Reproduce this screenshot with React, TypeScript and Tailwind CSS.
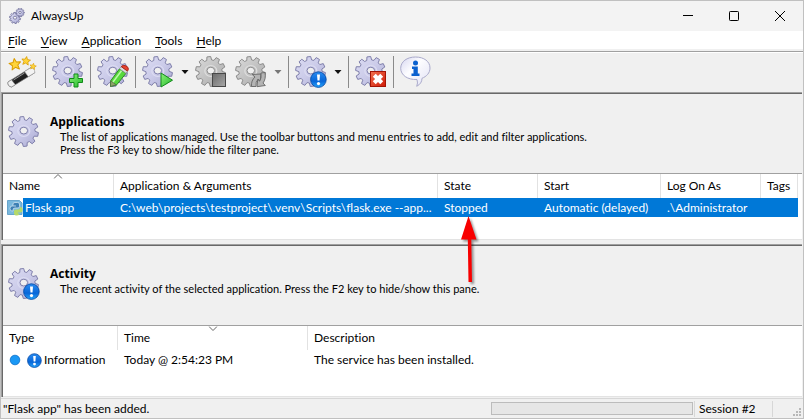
import type { ReactNode } from "react";

type Badge = "add" | "edit" | "play" | "stop" | "restart" | "info" | "close";

const TEETH = 10;

function gearPath(cx: number, cy: number, outer: number, inner: number, turn: number) {
  const step = (Math.PI * 2) / TEETH;
  const marks = [
    [-0.34, inner],
    [-0.2, outer],
    [0.2, outer],
    [0.34, inner],
  ];
  const points: string[] = [];
  for (let i = 0; i < TEETH; i++) {
    for (const [offset, radius] of marks) {
      const angle = (i + offset) * step + turn;
      points.push(`${(cx + Math.cos(angle) * radius).toFixed(2)} ${(cy + Math.sin(angle) * radius).toFixed(2)}`);
    }
  }
  return `M${points.join("L")}Z`;
}

const HOLE = "M12 14.6a3.8 3.400 0 1 0 7.600 0a3.800 3.400 0 1 0 -7.600 0Z";
const GEAR = gearPath(15.5, 15.5, 15, 11.6, 0.2) + HOLE;
const SMALL_A = gearPath(6, 10, 5.6, 4.2, 0.2) + "M4.3 9.7a1.7 1.5 0 1 0 3.4 0a1.7 1.5 0 1 0 -3.4 0Z";
const SMALL_B = gearPath(11, 4.6, 4.3, 3.2, 0) + "M9.7 4.4a1.3 1.1 0 1 0 2.6 0a1.3 1.1 0 1 0 -2.6 0Z";

function Defs() {
  return (
    <svg className="absolute size-0" aria-hidden="true">
      <defs>
        <linearGradient id="lilac" x1="0" y1="0" x2="1" y2="1">
          <stop offset="0" stopColor="#dcdcf3" />
          <stop offset=".5" stopColor="#cbcbe9" />
          <stop offset="1" stopColor="#a9a9d2" />
        </linearGradient>
        <linearGradient id="silver" x1="0" y1="0" x2="1" y2="1">
          <stop offset="0" stopColor="#dcdcdc" />
          <stop offset="1" stopColor="#a8a8a8" />
        </linearGradient>
        <linearGradient id="blue" x1="0" y1="0" x2="0" y2="1">
          <stop offset="0" stopColor="#2a8cf0" />
          <stop offset=".6" stopColor="#0866d8" />
          <stop offset="1" stopColor="#25a5fb" />
        </linearGradient>
        <linearGradient id="green" x1="0" y1="0" x2="1" y2="1">
          <stop offset="0" stopColor="#8df27a" />
          <stop offset="1" stopColor="#22b82a" />
        </linearGradient>
        <linearGradient id="red" x1="0" y1="0" x2="1" y2="1">
          <stop offset="0" stopColor="#f2714f" />
          <stop offset="1" stopColor="#cf1a08" />
        </linearGradient>
        <linearGradient id="steel" x1="0" y1="0" x2="1" y2="1">
          <stop offset="0" stopColor="#6a6a6a" />
          <stop offset="1" stopColor="#a8a8a8" />
        </linearGradient>
        <linearGradient id="bubble" x1="0" y1="0" x2="1" y2="1">
          <stop offset="0" stopColor="#d6d6f0" />
          <stop offset=".4" stopColor="#fdfdff" />
          <stop offset="1" stopColor="#e0e0f4" />
        </linearGradient>
        <linearGradient id="shaft" x1="0" y1="0" x2="1" y2="1">
          <stop offset="0" stopColor="#8a8a8a" />
          <stop offset=".35" stopColor="#2a2a2a" />
          <stop offset="1" stopColor="#050505" />
        </linearGradient>
      </defs>
    </svg>
  );
}

function Bang() {
  return (
    <g>
      <circle cx="23.4" cy="23.6" r="7.8" fill="url(#blue)" stroke="#0a4ea8" strokeWidth=".9" />
      <path d="M22 18.4h3l-.5 6.2h-2Z" fill="#fff" />
      <circle cx="23.5" cy="27.6" r="1.6" fill="#fff" />
    </g>
  );
}

function BadgeShape({ kind }: { kind: Badge }) {
  switch (kind) {
    case "add":
      return (
        <path d="M22 18h4v4.500h4.500v4h-4.500v4.500h-4v-4.500H17.500v-4h4.500Z" fill="url(#green)" stroke="#118a1a" />
      );
    case "edit":
      return (
        <g strokeLinejoin="round">
          <path d="M13.500 30.500L13.700 24.800L22.500 12.800L29 17.300L19.700 28.800Z" fill="#58d83c" stroke="#2c8c24" />
          <path d="M13.500 30.500L13.700 24.800L19.200 28.800Z" fill="#8fa46a" stroke="#4c6a3e" strokeWidth=".7" />
          <path d="M22.500 12.800l1.700-2.200 6.300 4.500-1.600 2.200Z" fill="#dcdcdc" stroke="#888" strokeWidth=".6" />
          <path d="M24.200 10.600q1.800-2 4.600-.8q3.400 1.600 2.400 4l-.7 1.300Z" fill="#e8432f" stroke="#a8261b" />
          <path d="M16 26L24.500 14.800" stroke="#bdf9a8" strokeWidth="1.500" />
        </g>
      );
    case "play":
      return <path d="M19 17L30.500 24.200L19 31Z" fill="url(#green)" stroke="#118a1a" strokeLinejoin="round" />;
    case "stop":
      return <rect x="17.500" y="17.500" width="13" height="13" fill="url(#steel)" stroke="#474747" />;
    case "restart":
      return (
        <g fill="#b4b4b4" stroke="#666" strokeWidth=".9" strokeLinejoin="round">
          <path d="M16.500 30.500q-.5-6 3.500-9.500l-2.800-2.500 8.800-.5-.7 7-2.300-1.700q-2.500 2.500-2 7.200Z" />
          <path d="M30 16.500q1.200 6.500-2 10.500l2.300 2.500-8.300 1.200.7-7.200 2 1.600q2-2.800 1.300-8.100Z" />
        </g>
      );
    case "close":
      return (
        <g>
          <rect x="15.500" y="15.500" width="15" height="15" fill="url(#red)" stroke="#a31405" />
          <path
            d="M17.800 20.700l2.900-2.900 2.300 2.300 2.300-2.300 2.900 2.900-2.300 2.300 2.300 2.300-2.900 2.900-2.300-2.300-2.300 2.300-2.900-2.900 2.300-2.300Z"
            fill="#fff"
          />
        </g>
      );
    default:
      return <Bang />;
  }
}

function Gear({ badge, gray = false }: { badge?: Badge; gray?: boolean }) {
  return (
    <svg viewBox="0 0 32 32" className="size-8 shrink-0" aria-hidden="true">
      <path
        d={GEAR}
        fillRule="evenodd"
        fill={gray ? "url(#silver)" : "url(#lilac)"}
        stroke={gray ? "#8c8c8c" : "#8080ab"}
        strokeWidth="1"
        strokeLinejoin="round"
      />
      <ellipse cx="15.800" cy="15" rx="6" ry="5.500" fill="none" stroke={gray ? "#dedede" : "#dcdcf2"} strokeWidth="1.200" />
      {badge && <BadgeShape kind={badge} />}
    </svg>
  );
}

function Wand() {
  const star = "M0-6L1.700-2.200L5.800-1.900L2.700.9L3.700 5L0 2.800L-3.600 5L-2.700.9L-5.800-1.900L-1.700-2.200Z";
  return (
    <svg viewBox="0 0 32 32" className="size-8 shrink-0" aria-hidden="true">
      <path d="M1 26L24 11.500L27.800 16.700L4.500 31Q.3 30 1 26Z" fill="url(#shaft)" stroke="#777" strokeWidth=".7" />
      <path d="M17.500 15.600L24 11.500Q28 12.500 27.800 16.700L21.300 20.700Z" fill="#f3f3f3" stroke="#999" strokeWidth=".6" />
      <path d="M1 26L4.500 23.800L8.300 28.700L4.500 31Q.3 30 1 26Z" fill="#f0f0f0" stroke="#888" strokeWidth=".6" />
      <path d="M6.500 24L17.500 17" stroke="#999" strokeWidth="1" />
      <g fill="#ffd43a" stroke="#d99c00" strokeWidth="1" strokeLinejoin="round">
        <path d={star} transform="translate(8 8.500) rotate(-8)" />
        <path d={star} transform="translate(19 5) rotate(8) scale(.75)" />
        <path d={star} transform="translate(26 10.500) rotate(10) scale(.55)" />
      </g>
    </svg>
  );
}

function Bubble() {
  return (
    <svg viewBox="0 0 32 32" className="size-8 shrink-0" aria-hidden="true">
      <path
        d="M15.500 1C24 1 30 5.500 30 12C30 17 26.500 20.500 22 22.300Q22 27.500 16.700 30.300Q18.200 27 17 23.500C7.500 24 .7 19 .7 12.300C.7 5.500 7 1 15.500 1Z"
        fill="url(#bubble)"
        stroke="#aaaacb"
      />
      <circle cx="15.500" cy="7" r="2.500" fill="#0b61cf" />
      <path d="M12 10.500h5.800v7h1.700v2.500h-8v-2.500h2v-4.500h-1.500Z" fill="#0b61cf" />
    </svg>
  );
}

function ToolButton({ label, disabled, children }: { label: string; disabled?: boolean; children: ReactNode }) {
  return (
    <button type="button" aria-label={label} disabled={disabled} className="flex shrink-0">
      {children}
    </button>
  );
}

function Caret({ label, disabled = false }: { label: string; disabled?: boolean }) {
  return (
    <button type="button" aria-label={label} disabled={disabled} className="ml-[7px] flex h-8 w-2 shrink-0 items-center">
      <svg viewBox="0 0 8 4" className="h-1 w-2" aria-hidden="true">
        <path d="M.500 0H7.500L4 4Z" fill={disabled ? "#777" : "#111"} />
      </svg>
    </button>
  );
}

function Separator() {
  return <span className="mx-1.5 h-8 w-px shrink-0 bg-[#8a8a8a]" />;
}

function SortMark({ up = false }: { up?: boolean }) {
  return (
    <svg viewBox="0 0 9 5" className="absolute top-0 left-1/2 h-[5px] w-[9px] -translate-x-1/2" aria-hidden="true">
      <path d={up ? "M.5 4.500L4.500.5L8.500 4.500" : "M.5.5L4.500 4.500L8.500.5"} fill="none" stroke="#666" />
    </svg>
  );
}

function HeadCell({ children, mark, last = false }: { children: ReactNode; mark?: ReactNode; last?: boolean }) {
  return (
    <th
      scope="col"
      className={
        last
          ? "relative h-6 pl-1.5 text-left font-normal"
          : "relative h-6 border-r border-[#e2e2e2] pl-1.5 text-left font-normal"
      }
    >
      {mark}
      {children}
    </th>
  );
}

function PaneHeader({ icon, title, children }: { icon: ReactNode; title: string; children: ReactNode }) {
  return (
    <header className="flex h-20 items-start gap-2.5 border-b border-[#a0a0a0] bg-[#f0f0f0] pt-5 pl-[5px]">
      <div className="pt-0.5">{icon}</div>
      <div className="text-[11px] leading-[13px]">
        <h2 className="font-['Open_Sans',sans-serif] text-[12px] leading-4 font-bold">{title}</h2>
        <div className="pl-2.5">{children}</div>
      </div>
    </header>
  );
}

function PythonFile() {
  return (
    <svg viewBox="0 0 16 16" className="size-4 shrink-0" aria-hidden="true">
      <path d="M.5.5H12.500L15 3V14.500H.5Z" fill="#7ab8dd" stroke="#68a5cc" />
      <path
        d="M6 5.500V4Q6 2.500 8 2.500H10.500Q12.500 2.500 12.500 4V6.500Q12.500 8 11 8H8Q6 8 6 10V11H5Q3 11 3 8.500Q3 6 5 6H9"
        fill="#3d7fb4"
        stroke="#dcebf5"
        strokeWidth=".7"
      />
      <path
        d="M13 7H14Q15.700 7.500 15.700 10Q15.500 12.500 13.500 12.500H11V13.500H13Q12.500 15.500 10 15.500Q7 15.500 7 13.500V11Q7 9.500 9 9.500H11.500Q13 9.500 13 7Z"
        fill="#b5d96a"
      />
    </svg>
  );
}

const menus = ["File", "View", "Application", "Tools", "Help"];

export default function App() {
  return (
    <div className="flex h-screen flex-col overflow-hidden border border-[#c0c0c0] bg-[#f0f0f0] font-['Lato','Open_Sans',sans-serif] text-[12px] leading-4 text-black [font-variant-ligatures:none]">
      <Defs />
      <div className="flex h-[30px] shrink-0 items-center bg-[#f3f3f3] pl-2">
        <svg viewBox="0 0 16 16" className="size-4" aria-hidden="true">
          <path d={SMALL_A} fillRule="evenodd" fill="url(#lilac)" stroke="#6e6e9a" strokeWidth=".8" />
          <path d={SMALL_B} fillRule="evenodd" fill="url(#lilac)" stroke="#6e6e9a" strokeWidth=".8" />
        </svg>
        <h1 className="ml-1.5 flex-1">AlwaysUp</h1>
        <div className="flex h-full">
          <button type="button" aria-label="Minimize" className="flex w-[46px] items-center justify-center">
            <svg viewBox="0 0 10 10" className="size-2.5"><path d="M0 4.500H10" stroke="#000" /></svg>
          </button>
          <button type="button" aria-label="Maximize" className="flex w-[46px] items-center justify-center">
            <svg viewBox="0 0 10 10" className="size-2.5"><rect x=".5" y=".5" width="9" height="9" rx=".8" fill="none" stroke="#000" /></svg>
          </button>
          <button type="button" aria-label="Close" className="flex w-[46px] items-center justify-center">
            <svg viewBox="0 0 10 10" className="size-2.5"><path d="M0 0L10 10M10 0L0 10" stroke="#000" /></svg>
          </button>
        </div>
      </div>

      <nav className="mb-0.5 flex h-[18px] shrink-0 items-end gap-3.5 bg-white pl-[7px]">
        {menus.map((name) => (
          <button key={name} type="button">
            <span className="underline underline-offset-2">{name[0]}</span>
            {name.slice(1)}
          </button>
        ))}
      </nav>

      <div className="flex h-[41px] shrink-0 items-center border-t border-[#a0a0a0] pl-1.5 shadow-[inset_0_1px_0_#fff]">
        <ToolButton label="Wizard"><Wand /></ToolButton>
        <Separator />
        <ToolButton label="Add application"><Gear badge="add" /></ToolButton>
        <Separator />
        <ToolButton label="Edit application"><Gear badge="edit" /></ToolButton>
        <Separator />
        <ToolButton label="Start"><Gear badge="play" /></ToolButton>
        <Caret label="Start options" />
        <span className="w-1.5 shrink-0" />
        <ToolButton label="Stop" disabled><Gear badge="stop" gray /></ToolButton>
        <span className="w-2 shrink-0" />
        <ToolButton label="Restart" disabled><Gear badge="restart" gray /></ToolButton>
        <Caret label="Restart options" disabled />
        <Separator />
        <ToolButton label="Report"><Gear badge="info" /></ToolButton>
        <Caret label="Report options" />
        <Separator />
        <ToolButton label="Remove"><Gear badge="close" /></ToolButton>
        <Separator />
        <ToolButton label="About"><Bubble /></ToolButton>
      </div>

      <section className="mr-px shrink-0 border-t border-l border-[#a0a0a0]">
        <div className="border-t border-l border-[#696969]">
          <PaneHeader icon={<Gear />} title="Applications">
            <p>The list of applications managed. Use the toolbar buttons and menu entries to add, edit and filter applications.</p>
            <p>Press the F3 key to show/hide the filter pane.</p>
          </PaneHeader>
          <div className="h-[66px] border-b border-[#e3e3e3] bg-white pr-1">
            <table className="w-full table-fixed border-separate border-spacing-0 whitespace-nowrap">
              <colgroup>
                <col className="w-[111px]" />
                <col />
                <col className="w-[100px]" />
                <col className="w-[123px]" />
                <col className="w-[100px]" />
                <col className="w-[37px]" />
              </colgroup>
              <thead>
                <tr>
                  <HeadCell mark={<SortMark up />}>Name</HeadCell>
                  <HeadCell>Application &amp; Arguments</HeadCell>
                  <HeadCell>State</HeadCell>
                  <HeadCell>Start</HeadCell>
                  <HeadCell>Log On As</HeadCell>
                  <HeadCell>Tags</HeadCell>
                </tr>
              </thead>
              <tbody>
                <tr className="h-[19px] bg-[#0078d7] text-white">
                  <td className="p-0">
                    <div className="flex">
                      <span className="flex h-[19px] w-5 items-center bg-white pl-1"><PythonFile /></span>
                      <span className="pl-0.5 leading-[19px]">Flask app</span>
                    </div>
                  </td>
                  <td className="truncate py-0 pr-1 pl-1.5">C:\web\projects\testproject\.venv\Scripts\flask.exe --app...</td>
                  <td className="py-0 pr-0 pl-1.5">
                    <div className="relative">
                      Stopped
                      <svg viewBox="0 0 20 68" className="absolute top-4 left-4 z-10 h-[68px] w-5 drop-shadow-[2px_2px_1px_rgba(0,0,0,0.4)]" aria-hidden="true">
                        <path d="M8.500 0L16.500 23.500H11.300L12 66H8.500L7.800 23.500H1Z" fill="#f80000" />
                      </svg>
                    </div>
                  </td>
                  <td className="py-0 pr-0 pl-1.5">Automatic (delayed)</td>
                  <td className="py-0 pr-0 pl-1.5">.\Administrator</td>
                  <td className="p-0" />
                </tr>
              </tbody>
            </table>
          </div>
        </div>
      </section>

      <section className="mt-1 mr-px flex min-h-0 flex-1 flex-col border-t border-l border-[#a0a0a0]">
        <div className="flex min-h-0 flex-1 flex-col border-t border-l border-[#696969]">
          <PaneHeader icon={<Gear badge="info" />} title="Activity">
            <p>The recent activity of the selected application. Press the F2 key to hide/show this pane.</p>
          </PaneHeader>
          <div className="min-h-0 flex-1 border-b border-[#e3e3e3] bg-white">
            <table className="w-full table-fixed border-separate border-spacing-0 whitespace-nowrap">
              <colgroup>
                <col className="w-[115px]" />
                <col className="w-[190px]" />
                <col />
              </colgroup>
              <thead>
                <tr>
                  <HeadCell>Type</HeadCell>
                  <HeadCell mark={<SortMark />}>Time</HeadCell>
                  <HeadCell last>Description</HeadCell>
                </tr>
              </thead>
              <tbody>
                <tr className="h-5">
                  <td className="p-0">
                    <div className="flex items-center pl-1.5">
                      <svg viewBox="0 0 12 12" className="size-3" aria-hidden="true">
                        <circle cx="6" cy="6" r="4.800" fill="#1a98f5" stroke="#0b6fc8" strokeWidth=".8" />
                      </svg>
                      <svg viewBox="15 15 17 17" className="ml-1.5 size-[15px]" aria-hidden="true"><Bang /></svg>
                      <span className="ml-0.5">Information</span>
                    </div>
                  </td>
                  <td className="py-0 pr-0 pl-1.5">Today @ 2:54:23 PM</td>
                  <td className="py-0 pr-0 pl-1.5">The service has been installed.</td>
                </tr>
              </tbody>
            </table>
          </div>
        </div>
      </section>

      <footer className="mt-px flex h-5 shrink-0 items-center border-t border-[#d7d7d7] pl-0.5">
        <span className="flex-1">"Flask app" has been added.</span>
        <progress
          aria-label="Progress"
          value={0}
          max={100}
          className="h-[13px] w-[202px] appearance-none border border-[#bcbcbc] bg-[#e6e6e6] [&::-webkit-progress-bar]:bg-[#e6e6e6]"
        />
        <span className="ml-px h-4 w-[79px] border-x border-[#d7d7d7] pl-1">Session #2</span>
        <span className="flex w-[30px] justify-end self-end pr-0.5 pb-0.5">
          <svg viewBox="0 0 8 8" className="size-2" aria-hidden="true">
            <path d="M6 0h2v2h-2ZM3 3h2v2h-2ZM6 3h2v2h-2ZM0 6h2v2h-2ZM3 6h2v2h-2ZM6 6h2v2h-2Z" fill="#b8b8b8" />
          </svg>
        </span>
      </footer>
    </div>
  );
}
